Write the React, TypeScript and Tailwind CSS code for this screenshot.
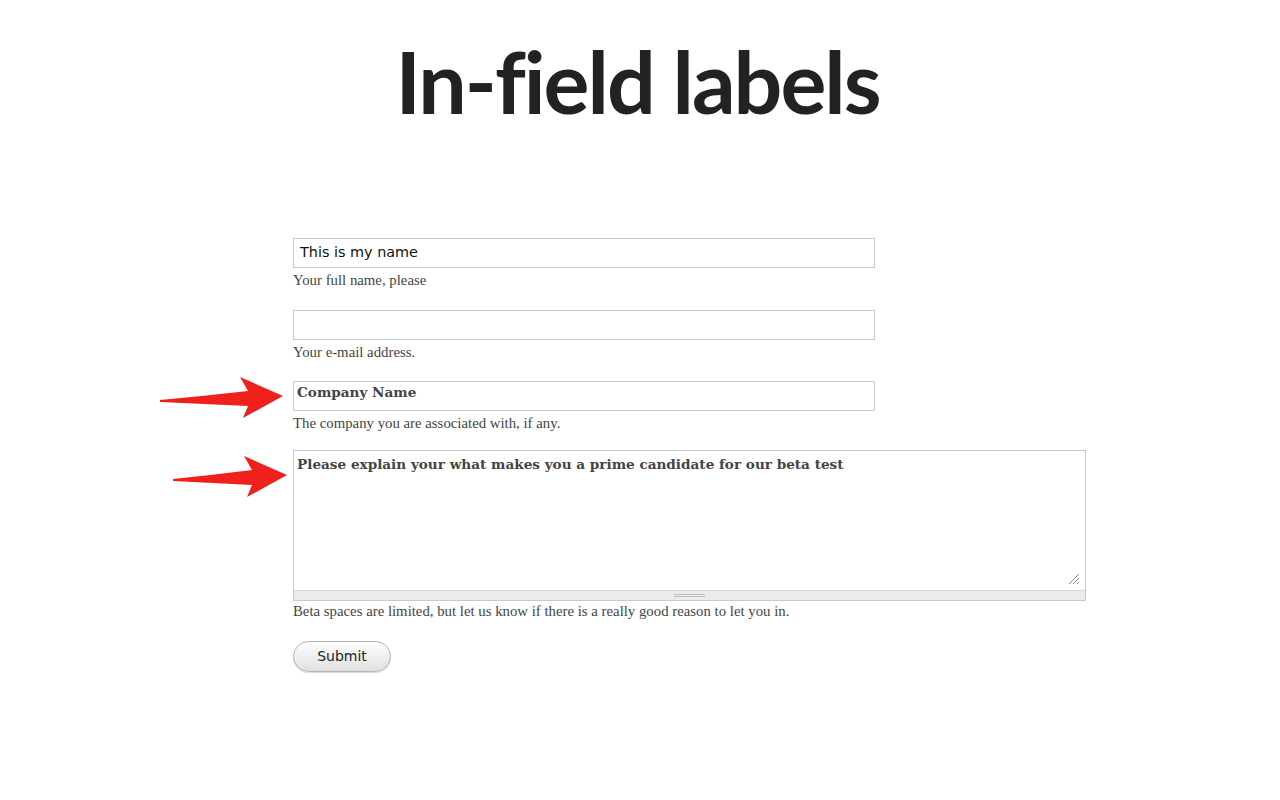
const serif = { fontFamily: '"Liberation Serif", serif' };

function Caption({ children, top = 'mt-[3px]' }: { children: React.ReactNode; top?: string }) {
  return (
    <p className={`${top} text-[14.8px] leading-[18px] text-[#444]`} style={serif}>
      {children}
    </p>
  );
}

function Arrow({ className, tail }: { className: string; tail: number }) {
  // tail = x where the thin end starts, head stays fixed on the right
  return (
    <svg className={className} width="130" height="46" viewBox="0 0 130 46">
      <path
        d={`M${tail} 24 Q${(tail + 88) / 2} 20 88 15 L80 1 L123 20 L83 42 L88 30 Q${(tail + 88) / 2} 28 ${tail} 26 Z`}
        fill="#f0201c"
      />
    </svg>
  );
}

export default function App() {
  return (
    <div className="relative w-[1280px] h-[800px] bg-white">
      <h1
        className="pt-[36px] pr-[5px] text-center text-[86px] leading-[90px] font-bold tracking-[-2px] text-[#222]"
        style={{ fontFamily: 'Lato, sans-serif' }}
      >
        In-field labels
      </h1>

      <form className="ml-[293px] mt-[112px] flex flex-col">
        <div className="mb-[21px]">
          <div className="w-[582px] h-[30px] border border-[#c9c9c9] flex items-center px-[6px]">
            <span className="text-[14.4px] text-[#111]" style={{ fontFamily: '"DejaVu Sans", sans-serif' }}>
              This is my name
            </span>
          </div>
          <Caption>Your full name, please</Caption>
        </div>

        <div className="mb-[20px]">
          <div className="w-[582px] h-[30px] border border-[#c9c9c9]" />
          <Caption>Your e-mail address.</Caption>
        </div>

        <div className="mb-[18px]">
          <div className="w-[582px] h-[30px] border border-[#c9c9c9] flex items-start px-[3px]">
            <span className="text-[13.6px] leading-[20px] font-bold text-[#444]" style={{ fontFamily: '"DejaVu Serif", serif' }}>
              Company Name
            </span>
          </div>
          <Caption>The company you are associated with, if any.</Caption>
        </div>

        <div className="mb-[21px]">
          <div className="w-[793px] border border-[#c9c9c9] flex flex-col">
            <div className="relative h-[139px] px-[3px]">
              <span className="text-[13.6px] leading-[22px] font-bold text-[#444]" style={{ fontFamily: '"DejaVu Serif", serif' }}>
                Please explain your what makes you a prime candidate for our beta test
              </span>
              <svg className="absolute right-[5px] bottom-[5px]" width="12" height="12" viewBox="0 0 12 12">
                <path d="M1 11 L11 1 M5 11 L11 5 M9 11 L11 9" stroke="#888" strokeWidth="1" />
              </svg>
            </div>
            <div className="h-[10px] bg-[#ececec] border-t border-[#d6d6d6] flex flex-col items-center justify-center gap-[1px]">
              <div className="w-[31px] h-px bg-[#bdbdbd]" />
              <div className="w-[31px] h-px bg-[#bdbdbd]" />
            </div>
          </div>
          <Caption top="mt-[1px]">Beta spaces are limited, but let us know if there is a really good reason to let you in.</Caption>
        </div>

        <button
          type="button"
          className="w-[98px] h-[31px] rounded-full border border-[#b4b4b4] bg-gradient-to-b from-white to-[#e0e0e0] text-[14px] text-[#222] shadow-[0_1px_1px_rgba(0,0,0,0.15)]"
          style={{ fontFamily: '"DejaVu Sans", sans-serif' }}
        >
          Submit
        </button>
      </form>

      <Arrow className="absolute left-[160px] top-[376px]" tail={0} />
      <Arrow className="absolute left-[164px] top-[455px]" tail={9} />
    </div>
  );
}
